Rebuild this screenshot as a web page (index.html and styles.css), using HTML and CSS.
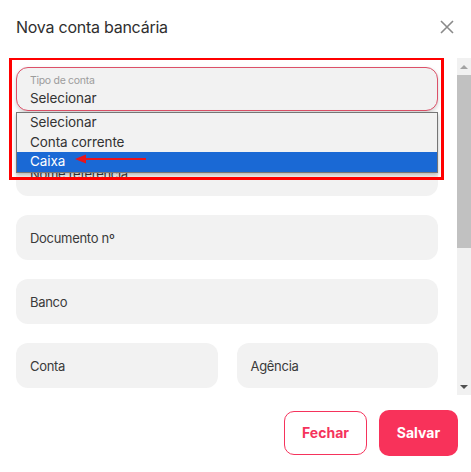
FILE: index.html
```html
<!DOCTYPE html>
<html lang="pt">
<head>
<meta charset="utf-8">
<link rel="stylesheet" href="styles.css">
</head>
<body>
<div class="modal">
  <header class="head">
    <h1 class="title">Nova conta bancária</h1>
    <svg class="close" width="14" height="14" viewBox="0 0 14 14"><path d="M1 1L13 13M13 1L1 13" stroke="#8a8a8a" stroke-width="1.6" fill="none"/></svg>
  </header>
  <div class="body">
    <div class="viewport">
      <div class="form">
        <div class="select">
          <span class="sel-label">Tipo de conta</span>
          <span class="sel-value">Selecionar</span>
        </div>
        <div class="field">Nome referencia</div>
        <div class="field">Documento nº</div>
        <div class="field">Banco</div>
        <div class="row">
          <div class="field">Conta</div>
          <div class="field">Agência</div>
        </div>
        <ul class="list">
          <li class="opt">Selecionar</li>
          <li class="opt">Conta corrente</li>
          <li class="opt active">Caixa</li>
        </ul>
        <div class="mark"></div>
        <svg class="arrow" width="72" height="12" viewBox="0 0 72 12"><path d="M10 6H71" stroke="#e8141b" stroke-width="2.2"/><path d="M0 6L11 1.5V10.5Z" fill="#e8141b"/></svg>
      </div>
    </div>
    <div class="sbar">
      <div class="sbtn"><svg width="8" height="4" viewBox="0 0 8 4"><path d="M0 4L4 0L8 4Z" fill="#a3a3a3"/></svg></div>
      <div class="thumb"></div>
      <div class="track"></div>
      <div class="sbtn"><svg width="8" height="4" viewBox="0 0 8 4"><path d="M0 0L4 4L8 0Z" fill="#505050"/></svg></div>
    </div>
  </div>
  <footer class="foot">
    <button class="btn ghost">Fechar</button>
    <button class="btn solid">Salvar</button>
  </footer>
</div>
</body>
</html>
```
FILE: styles.css
```css
* { box-sizing: border-box; }
html, body { margin: 0; padding: 0; background: #fff; }
body { font-family: Inter, "Noto Sans", sans-serif; color: #333; width: 471px; height: 472px; overflow: hidden; }
.modal { display: flex; flex-direction: column; width: 471px; height: 472px; }
.head { height: 58px; display: flex; align-items: center; justify-content: space-between; padding: 0 17px 4px 16px; }
.title { margin: 0; font-size: 16px; font-weight: 400; color: #2f2f2f; letter-spacing: -0.25px; }
.close { display: block; }
.body { height: 337px; display: flex; }
.viewport { flex: 1; overflow: hidden; }
.sbar { width: 14px; display: flex; flex-direction: column; background: #f1f1f1; }
.sbtn { height: 17px; display: flex; align-items: center; justify-content: center; }
.thumb { height: 173px; background: #c1c1c1; }
.track { flex: 1; }
.form { position: relative; padding: 9px 19px 0 16px; display: flex; flex-direction: column; gap: 19px; }
.select { height: 44px; border: 1px solid #dc5068; border-radius: 12px; background: #f2f2f2; box-shadow: 0 2px 4px rgba(0,0,0,0.18); padding: 6px 13px 0; display: flex; flex-direction: column; margin-bottom: 21px; }
.sel-label { font-size: 10.5px; color: #9c9c9c; line-height: 13px; letter-spacing: -0.3px; }
.sel-value { font-size: 13.5px; color: #333; line-height: 20px; margin-top: 1px; letter-spacing: -0.1px; }
.field { height: 45px; border-radius: 12px; background: #f2f2f2; display: flex; align-items: center; padding-left: 14px; font-size: 13px; color: #3a3a3a; letter-spacing: -0.3px; }
.row { display: grid; grid-template-columns: 1fr 1fr; gap: 19px; }
.list { position: absolute; left: 16px; top: 54px; width: 422px; margin: 0; padding: 0; list-style: none; background: #f2f2f2; border: 1px solid #767676; box-shadow: 0 2px 4px rgba(0,0,0,0.25); }
.opt { height: 19.5px; line-height: 19.5px; padding-left: 13px; font-size: 13.5px; color: #333; letter-spacing: -0.1px; }
.opt.active { background: #1a69d5; color: #fff; }
.mark { position: absolute; left: 9px; top: -1px; width: 435px; height: 123px; border: 3px solid #f00; }
.arrow { position: absolute; left: 75px; top: 95px; }
.foot { flex: 1; display: flex; justify-content: flex-end; align-items: center; gap: 12px; padding: 0 13px 2px 0; }
.btn { font-family: Inter, "Noto Sans", sans-serif; font-size: 14px; font-weight: 700; border-radius: 10px; cursor: pointer; }
.ghost { width: 83px; height: 44px; background: #fff; border: 1px solid #f5335c; color: #f5335c; }
.solid { width: 79px; height: 46px; background: #f8325a; border: none; color: #fff; }
```
